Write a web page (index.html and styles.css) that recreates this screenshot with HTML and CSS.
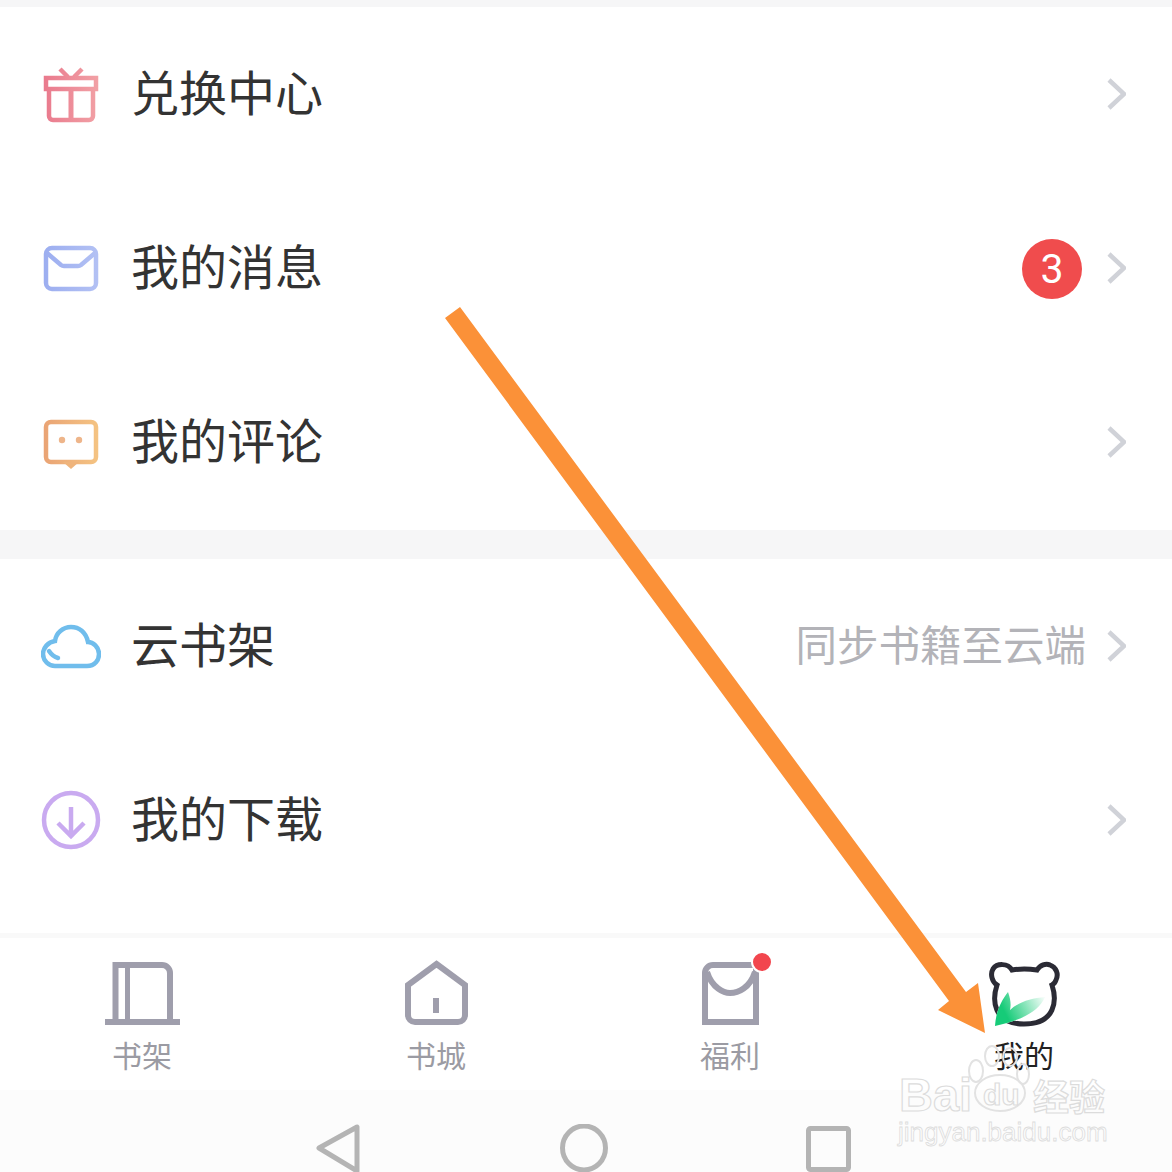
FILE: index.html
```html
<!DOCTYPE html>
<html lang="zh-CN">
<head>
    <meta charset="UTF-8">
    <meta name="viewport" content="width=device-width, initial-scale=1.0">
    <title>我的</title>
    <link rel="stylesheet" href="styles.css">
</head>
<body>

    <div class="page">
        <div class="gap gap-top"></div>

        <!-- First group -->
        <div class="row">
            <svg class="row-icon" viewBox="0 0 60 60" fill="none" stroke="url(#g-gift)" stroke-width="4.5">
                <defs>
                    <linearGradient id="g-gift" gradientUnits="userSpaceOnUse" x1="0" y1="30" x2="60" y2="30">
                        <stop offset="0" stop-color="#e9788c"/><stop offset="1" stop-color="#f2a2a6"/>
                    </linearGradient>
                </defs>
                <rect x="5" y="14" width="50" height="11"/>
                <path d="M8 25V52a4 4 0 0 0 4 4H48a4 4 0 0 0 4-4V25"/>
                <path d="M30 25V56" stroke-width="5"/>
                <path d="M19 5l8 8M41 5l-8 8"/>
            </svg>
            <div class="row-title">兑换中心</div>
            <svg class="chevron" viewBox="0 0 20 32"><path d="M3 2L18 16L3 30"/></svg>
        </div>

        <div class="row">
            <svg class="row-icon" viewBox="0 0 60 60" fill="none" stroke="url(#g-mail)" stroke-width="4.5">
                <defs>
                    <linearGradient id="g-mail" gradientUnits="userSpaceOnUse" x1="0" y1="30" x2="60" y2="30">
                        <stop offset="0" stop-color="#9badf0"/><stop offset="1" stop-color="#b4c2f4"/>
                    </linearGradient>
                </defs>
                <rect x="5" y="10" width="50" height="41" rx="6"/>
                <path d="M6 15L20 27a5 5 0 0 0 3 1H37a5 5 0 0 0 3-1L54 15"/>
            </svg>
            <div class="row-title">我的消息</div>
            <div class="badge">3</div>
            <svg class="chevron" viewBox="0 0 20 32"><path d="M3 2L18 16L3 30"/></svg>
        </div>

        <div class="row">
            <svg class="row-icon" viewBox="0 0 60 60" fill="none" stroke="url(#g-chat)" stroke-width="4.5">
                <defs>
                    <linearGradient id="g-chat" gradientUnits="userSpaceOnUse" x1="0" y1="30" x2="60" y2="30">
                        <stop offset="0" stop-color="#e9a274"/><stop offset="1" stop-color="#f5c583"/>
                    </linearGradient>
                </defs>
                <rect x="5" y="10" width="50" height="40" rx="5"/>
                <path d="M22 50H38L30 57Z" fill="#efb47c" stroke="none"/>
                <circle cx="21" cy="28" r="3.2" fill="#eeb58a" stroke="none"/>
                <circle cx="38" cy="28" r="3.2" fill="#eeb58a" stroke="none"/>
            </svg>
            <div class="row-title">我的评论</div>
            <svg class="chevron" viewBox="0 0 20 32"><path d="M3 2L18 16L3 30"/></svg>
        </div>

        <div class="gap gap-group"></div>

        <!-- Second group -->
        <div class="row">
            <svg class="row-icon" viewBox="0 0 60 60" fill="none" stroke="#70bdec" stroke-width="4.5">
                <path d="M14 50H46C54 50 58 44 58 38C58 31 52 26 47 26C45 16 38 11 30 11C22 11 15 17 14 25C7 26 2 32 2 38C2 45 8 50 14 50Z"/>
                <path d="M8 35C10 38 13 41 17 42" stroke-linecap="round"/>
            </svg>
            <div class="row-title">云书架</div>
            <div class="row-hint">同步书籍至云端</div>
            <svg class="chevron" viewBox="0 0 20 32"><path d="M3 2L18 16L3 30"/></svg>
        </div>

        <div class="row">
            <svg class="row-icon" viewBox="0 0 60 60" fill="none" stroke="#c9aaf0" stroke-width="4.5">
                <circle cx="30" cy="30" r="27"/>
                <path d="M30 17V45M17 33L30 46L43 33"/>
            </svg>
            <div class="row-title">我的下载</div>
            <svg class="chevron" viewBox="0 0 20 32"><path d="M3 2L18 16L3 30"/></svg>
        </div>

        <div class="gap gap-nav"></div>

        <!-- Bottom tabs -->
        <div class="tabs">
            <div class="tab">
                <svg class="tab-icon" viewBox="0 0 80 66" fill="none" stroke="#9f9eac" stroke-width="6">
                    <path d="M13.5 60V5H60a8 8 0 0 1 8 8V60"/>
                    <path d="M25.5 5V60" stroke-width="5"/>
                    <path d="M3 62H78"/>
                </svg>
                <div class="tab-label">书架</div>
            </div>
            <div class="tab">
                <svg class="tab-icon" viewBox="0 0 80 66" fill="none" stroke="#9f9eac" stroke-width="6">
                    <path d="M40.5 4L69 25V55a7 7 0 0 1-7 7H19a7 7 0 0 1-7-7V25Z"/>
                    <path d="M40 38V53"/>
                </svg>
                <div class="tab-label">书城</div>
            </div>
            <div class="tab">
                <svg class="tab-icon" viewBox="0 0 80 66" fill="none" stroke="#9f9eac" stroke-width="6">
                    <path d="M15 13a8 8 0 0 1 8-8H66V62H15Z"/>
                    <path d="M17 12C22 28 34 33 40 33C48 33 60 28 65 12"/>
                    <circle cx="72" cy="2" r="10" fill="#f2464e" stroke="#fff" stroke-width="2"/>
                </svg>
                <div class="tab-label">福利</div>
            </div>
            <div class="tab">
                <svg class="tab-icon" viewBox="0 0 80 66" fill="none">
                    <defs>
                        <linearGradient id="g-leaf" gradientUnits="userSpaceOnUse" x1="14" y1="62" x2="60" y2="38">
                            <stop offset="0.2" stop-color="#16cb78"/><stop offset="1" stop-color="#16cb78" stop-opacity="0.05"/>
                        </linearGradient>
                    </defs>
                    <path d="M28 10Q40 8 53 10C56 5 62 3 66 5C72 7 75 14 72 20C71 23 70 24 68 25C73 40 72 64 40 64C9 64 8 40 13 25C8 22 6 14 9 9C13 3 24 3 28 10Z" stroke="#2b2b35" stroke-width="5"/>
                    <path d="M11 66C12 50 18 40 24 32C27 40 27 46 26 50C35 42 47 38 61 37C55 52 35 61 11 66Z" fill="#fff"/>
                    <path d="M11 66C12 50 18 40 24 32C27 40 27 46 26 50C35 42 47 38 61 37C55 52 35 61 11 66Z" fill="url(#g-leaf)"/>
                </svg>
                <div class="tab-label tab-label-active">我的</div>
            </div>
        </div>

        <!-- System buttons -->
        <div class="sysbar">
            <svg class="sys-back" viewBox="0 0 44 50" fill="none" stroke="#b4b4b4" stroke-width="5" stroke-linejoin="round">
                <path d="M41 3V47L3 24Z"/>
            </svg>
            <svg class="sys-home" viewBox="0 0 48 50" fill="none" stroke="#b4b4b4" stroke-width="5">
                <ellipse cx="24" cy="24" rx="21.5" ry="22"/>
            </svg>
            <svg class="sys-recent" viewBox="0 0 45 50" fill="none" stroke="#b4b4b4" stroke-width="5">
                <rect x="2.5" y="4.5" width="40" height="41" rx="2"/>
            </svg>
        </div>

        <!-- Annotation arrow drawn on top of the shot -->
        <svg class="arrow" viewBox="0 0 1172 1172">
            <polygon points="445,318 460,307 966,992 978,983 985,1033 938,1010 949,1001" fill="#fb9138"/>
        </svg>

        <!-- Watermark -->
        <div class="wm">
            <svg class="wm-paw" viewBox="0 0 70 70" fill="none" stroke="#e2e2e2" stroke-width="2">
                <ellipse cx="36" cy="48" rx="25" ry="18"/>
                <ellipse cx="12" cy="26" rx="7" ry="11"/>
                <ellipse cx="28" cy="11" rx="7" ry="10"/>
                <ellipse cx="46" cy="12" rx="7" ry="9"/>
                <ellipse cx="59" cy="29" rx="6" ry="10"/>
            </svg>
            <div class="wm-bai">Bai</div>
            <div class="wm-du">du</div>
            <div class="wm-jy">经验</div>
            <div class="wm-url">jingyan.baidu.com</div>
        </div>
    </div>

</body>
</html>
```

FILE: styles.css
```css
body {
    margin: 0;
    padding: 0;
    background-color: white;
    font-family: "Noto Sans CJK SC", "Noto Sans", sans-serif;
    overflow: hidden;
}

.page {
    position: relative;
    width: 1172px;
    height: 1172px;
    overflow: hidden;
}

.gap {
    background-color: #f6f6f7;
}

.gap-top {
    height: 7px;
}

.gap-group {
    height: 29px;
    margin-top: 1px;
}

.gap-nav {
    height: 5px;
    margin-top: 26px;
    background-color: #f9f9f9;
}

.row {
    height: 174px;
    display: flex;
    align-items: center;
    padding: 0 46px 0 41px;
}

.row-icon {
    width: 60px;
    height: 60px;
    margin-right: 30px;
    flex-shrink: 0;
}

.row-title {
    flex: 1;
    font-size: 48px;
    color: #333333;
    line-height: 60px;
    padding-bottom: 8px;
}

.row-hint {
    font-size: 41.5px;
    color: #b3b3b8;
    margin-right: 20px;
    line-height: 60px;
    padding-bottom: 6px;
}

.badge {
    width: 60px;
    height: 60px;
    border-radius: 50%;
    background-color: #f04c4d;
    color: white;
    font-family: Roboto, sans-serif;
    font-size: 41px;
    line-height: 60px;
    text-align: center;
    margin-right: 24px;
    margin-top: 2px;
}

.chevron {
    width: 20px;
    height: 32px;
    fill: none;
    stroke: #d0d2d8;
    stroke-width: 4.5;
}

.tabs {
    height: 152px;
    margin-left: -5px;
    display: grid;
    grid-template-columns: repeat(4, 294px);
}

.tab {
    display: flex;
    flex-direction: column;
    align-items: center;
    padding-top: 22px;
}

.tab-icon {
    width: 80px;
    height: 66px;
    overflow: visible;
}

.tab-label {
    font-size: 30px;
    line-height: 40px;
    margin-top: 8px;
    color: #9b9ba3;
}

.tab-label-active {
    color: #222222;
}

.sysbar {
    height: 82px;
    background-color: #fcfcfc;
    display: flex;
    align-items: flex-start;
    padding: 34px 0 0 316px;
    overflow: hidden;
}

.sys-back {
    width: 44px;
    height: 50px;
    margin-right: 200px;
    flex-shrink: 0;
}

.sys-home {
    width: 48px;
    height: 50px;
    margin-right: 198px;
    flex-shrink: 0;
}

.sys-recent {
    width: 45px;
    height: 50px;
    flex-shrink: 0;
}

.arrow {
    position: absolute;
    left: 0;
    top: 0;
    width: 1172px;
    height: 1172px;
}

.wm {
    position: absolute;
    left: 890px;
    top: 1040px;
    width: 230px;
    height: 115px;
    color: transparent;
    -webkit-text-stroke: 1.2px #dcdcdc;
}

.wm-paw {
    position: absolute;
    left: 74px;
    top: 5px;
    width: 70px;
    height: 70px;
}

.wm-bai {
    position: absolute;
    left: 9px;
    top: 27px;
    font-family: "Liberation Sans", sans-serif;
    font-weight: bold;
    font-size: 47px;
    line-height: 56px;
}

.wm-du {
    position: absolute;
    left: 93px;
    top: 37px;
    font-family: "Liberation Sans", sans-serif;
    font-weight: bold;
    font-size: 30px;
    line-height: 36px;
}

.wm-jy {
    position: absolute;
    left: 143px;
    top: 33px;
    font-weight: bold;
    font-size: 36px;
    line-height: 44px;
}

.wm-url {
    position: absolute;
    left: 8px;
    top: 78px;
    font-family: "Liberation Sans", sans-serif;
    font-size: 26px;
    line-height: 28px;
    -webkit-text-stroke-width: 0.8px;
}
```
